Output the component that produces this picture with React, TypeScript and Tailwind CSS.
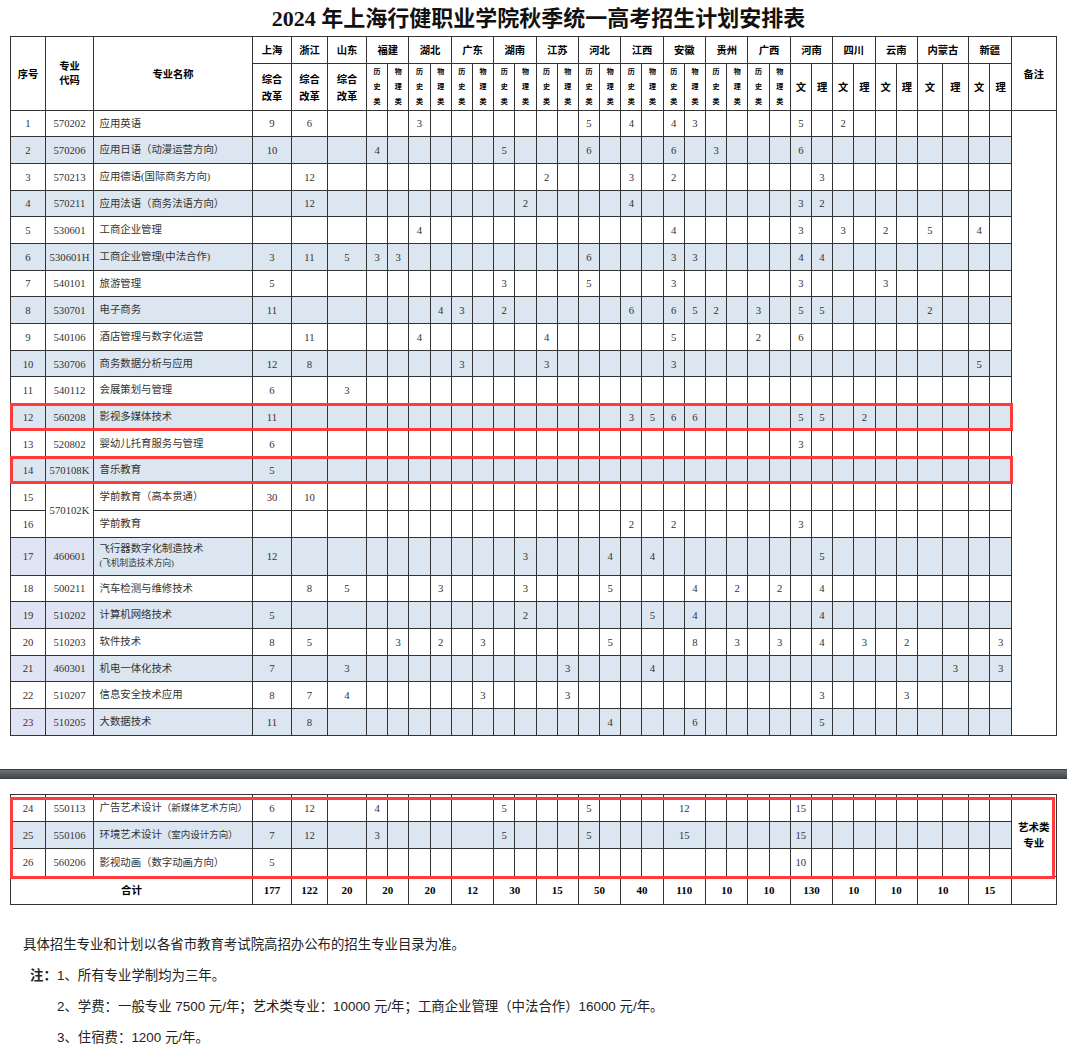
import React from 'react';

type Vals = Record<number, string>;

type Row = {
  no: number;
  code?: string;
  codeSpan?: number;
  name: React.ReactNode;
  vals: Vals;
  shade?: boolean;
  tall?: boolean;
  mark?: boolean;
};

// "0:9 1:6" -> { 0: '9', 1: '6' }
const v = (s: string): Vals => {
  const out: Vals = {};
  s.split(' ')
    .filter(Boolean)
    .forEach((p) => {
      const [k, val] = p.split(':');
      out[Number(k)] = val;
    });
  return out;
};

const COL_W = [
  'w-[35px]',
  'w-[48px]',
  'w-[159px]',
  'w-[39px]',
  'w-[36px]',
  'w-[39px]',
  ...Array(26).fill('w-[21.2px]'),
  'w-[25px]',
  'w-[26px]',
  'w-[21.6px]',
  'w-[21.4px]',
  'w-[44.8px]',
];

const GROUP2 = ['福建', '湖北', '广东', '湖南', '江苏', '河北', '江西', '安徽', '贵州', '广西'];
const GROUP3 = ['河南', '四川', '云南', '内蒙古', '新疆'];

const ROWS: Row[] = [
  { no: 1, code: '570202', name: '应用英语', vals: v('0:9 1:6 5:3 13:5 15:4 17:4 18:3 23:5 25:2') },
  { no: 2, code: '570206', name: '应用日语（动漫运营方向）', vals: v('0:10 3:4 9:5 13:6 17:6 19:3 23:6'), shade: true },
  { no: 3, code: '570213', name: '应用德语(国际商务方向)', vals: v('1:12 11:2 15:3 17:2 24:3') },
  { no: 4, code: '570211', name: '应用法语（商务法语方向）', vals: v('1:12 10:2 15:4 23:3 24:2'), shade: true },
  { no: 5, code: '530601', name: '工商企业管理', vals: v('5:4 17:4 23:3 25:3 27:2 29:5 31:4') },
  { no: 6, code: '530601H', name: '工商企业管理(中法合作)', vals: v('0:3 1:11 2:5 3:3 4:3 13:6 17:3 18:3 23:4 24:4'), shade: true },
  { no: 7, code: '540101', name: '旅游管理', vals: v('0:5 9:3 13:5 17:3 23:3 27:3') },
  { no: 8, code: '530701', name: '电子商务', vals: v('0:11 6:4 7:3 9:2 15:6 17:6 18:5 19:2 21:3 23:5 24:5 29:2'), shade: true },
  { no: 9, code: '540106', name: '酒店管理与数字化运营', vals: v('1:11 5:4 11:4 17:5 21:2 23:6') },
  { no: 10, code: '530706', name: '商务数据分析与应用', vals: v('0:12 1:8 7:3 11:3 17:3 31:5'), shade: true },
  { no: 11, code: '540112', name: '会展策划与管理', vals: v('0:6 2:3') },
  { no: 12, code: '560208', name: '影视多媒体技术', vals: v('0:11 15:3 16:5 17:6 18:6 23:5 24:5 26:2'), shade: true, mark: true },
  { no: 13, code: '520802', name: '婴幼儿托育服务与管理', vals: v('0:6 23:3') },
  { no: 14, code: '570108K', name: '音乐教育', vals: v('0:5'), shade: true, mark: true },
  { no: 15, code: '570102K', codeSpan: 2, name: '学前教育（高本贯通）', vals: v('0:30 1:10') },
  { no: 16, name: '学前教育', vals: v('15:2 17:2 23:3') },
  {
    no: 17,
    code: '460601',
    name: (
      <div className="flex flex-col leading-[15px]">
        <span>飞行器数字化制造技术</span>
        <span className="text-[8.6px]">(飞机制造技术方向)</span>
      </div>
    ),
    vals: v('0:12 10:3 14:4 16:4 24:5'),
    shade: true,
    tall: true,
  },
  { no: 18, code: '500211', name: '汽车检测与维修技术', vals: v('1:8 2:5 6:3 10:3 14:5 18:4 20:2 22:2 24:4') },
  { no: 19, code: '510202', name: '计算机网络技术', vals: v('0:5 10:2 16:5 18:4 24:4'), shade: true },
  { no: 20, code: '510203', name: '软件技术', vals: v('0:8 1:5 4:3 6:2 8:3 14:5 18:8 20:3 22:3 24:4 26:3 28:2 32:3') },
  { no: 21, code: '460301', name: '机电一体化技术', vals: v('0:7 2:3 12:3 16:4 30:3 32:3'), shade: true },
  { no: 22, code: '510207', name: '信息安全技术应用', vals: v('0:8 1:7 2:4 8:3 12:3 24:3 28:3') },
  { no: 23, code: '510205', name: '大数据技术', vals: v('0:11 1:8 14:4 18:6 24:5'), shade: true },
];

const ART_ROWS: Row[] = [
  {
    no: 24,
    code: '550113',
    name: (
      <>
        广告艺术设计<span className="text-[9.5px]">（新媒体艺术方向）</span>
      </>
    ),
    vals: v('0:6 1:12 3:4 9:5 13:5 17:12 23:15'),
    mark: true,
  },
  {
    no: 25,
    code: '550106',
    name: (
      <>
        环境艺术设计<span className="text-[9.5px]">（室内设计方向）</span>
      </>
    ),
    vals: v('0:7 1:12 3:3 9:5 13:5 17:15 23:15'),
    shade: true,
  },
  { no: 26, code: '560206', name: '影视动画（数字动画方向）', vals: v('0:5 23:10') },
];

const TOTALS = ['177', '122', '20', '20', '20', '12', '30', '15', '50', '40', '110', '10', '10', '130', '10', '10', '10', '15'];

const line = 'border border-[#333]';
const th = `${line} p-0 text-center align-middle font-bold text-black [font-family:'Noto_Sans_CJK_SC',sans-serif]`;
const td = `${line} p-0 text-center align-middle text-[10.7px] text-[#333]`;
const nameTd = `${line} p-0 pl-[5.5px] text-left align-middle whitespace-nowrap text-[10.4px] text-[#333]`;

const Cols: React.FC = () => (
  <colgroup>
    {COL_W.map((w, i) => (
      <col key={i} className={w} />
    ))}
  </colgroup>
);

const Header: React.FC = () => (
  <thead>
    <tr className="h-[27px] text-[10.3px]">
      <th rowSpan={2} className={th}>
        序号
      </th>
      <th rowSpan={2} className={`${th} leading-[14px]`}>
        专业
        <br />
        代码
      </th>
      <th rowSpan={2} className={th}>
        专业名称
      </th>
      <th className={th}>上海</th>
      <th className={th}>浙江</th>
      <th className={th}>山东</th>
      {GROUP2.map((p) => (
        <th key={p} colSpan={2} className={th}>
          {p}
        </th>
      ))}
      {GROUP3.map((p) => (
        <th key={p} colSpan={2} className={th}>
          {p}
        </th>
      ))}
      <th rowSpan={2} className={th}>
        备注
      </th>
    </tr>
    <tr className="h-[46.5px]">
      {[0, 1, 2].map((i) => (
        <th key={i} className={`${th} text-[10.3px] leading-[17px]`}>
          综合
          <br />
          改革
        </th>
      ))}
      {GROUP2.map((p) => (
        <React.Fragment key={p}>
          <th className={`${th} text-[7px] leading-[15px]`}>
            历<br />史<br />类
          </th>
          <th className={`${th} text-[7px] leading-[15px]`}>
            物<br />理<br />类
          </th>
        </React.Fragment>
      ))}
      {GROUP3.map((p) => (
        <React.Fragment key={p}>
          <th className={`${th} text-[10.3px]`}>文</th>
          <th className={`${th} text-[10.3px]`}>理</th>
        </React.Fragment>
      ))}
    </tr>
  </thead>
);

const App: React.FC = () => {
  return (
    <div className="min-h-screen w-[1067px] bg-white [font-family:'Liberation_Serif','Noto_Sans_CJK_SC',serif]">
      {/* Title */}
      <div className="flex h-[36px] items-center justify-center pl-[10px] text-[22px] font-bold text-[#111]">
        2024 年上海行健职业学院秋季统一高考招生计划安排表
      </div>

      {/* Main table */}
      <table className="ml-[10px] w-[1046px] table-fixed border-collapse">
        <Cols />
        <Header />
        <tbody>
          {ROWS.map((r, ri) => {
            const lav = r.shade && r.no >= 17;
            return (
              <tr
                key={r.no}
                className={`${r.tall ? 'h-[38px]' : 'h-[26.7px]'} ${r.shade ? 'bg-[#dce6f1]' : 'bg-white'}`}
              >
                <td className={`${td} relative ${lav ? 'bg-[#dfe3f4]' : ''}`}>
                  {r.mark && (
                    <div className="pointer-events-none absolute -top-px -bottom-px -left-px z-10 w-[1003px] border-[3px] border-[#ff3b3b]" />
                  )}
                  {r.no}
                </td>
                {r.code !== undefined && (
                  <td rowSpan={r.codeSpan ?? 1} className={`${td} ${lav ? 'bg-[#dfe3f4]' : ''}`}>
                    {r.code}
                  </td>
                )}
                <td className={nameTd}>{r.name}</td>
                {Array.from({ length: 33 }, (_, i) => (
                  <td key={i} className={td}>
                    {r.vals[i] ?? ''}
                  </td>
                ))}
                {ri === 0 && <td rowSpan={23} className={`${line} bg-white p-0`} />}
              </tr>
            );
          })}
        </tbody>
      </table>

      {/* page break bar */}
      <div className="mt-[33px] h-[10px] w-full border-y border-[#3a3d40] bg-linear-to-b from-[#6e7174] to-[#45484b]" />

      {/* Art majors + totals */}
      <table className="mt-[15px] ml-[10px] w-[1046px] table-fixed border-collapse">
        <Cols />
        <tbody>
          {ART_ROWS.map((r, ri) => {
            const cells: React.ReactNode[] = [];
            for (let i = 0; i < 33; i++) {
              const merged = i === 7 || i === 17;
              cells.push(
                <td key={i} colSpan={merged ? 2 : 1} className={td}>
                  {r.vals[i] ?? ''}
                </td>
              );
              if (merged) i++;
            }
            return (
              <tr key={r.no} className={`h-[27.3px] ${r.shade ? 'bg-[#dce6f1]' : 'bg-white'}`}>
                <td className={`${td} relative`}>
                  {r.mark && (
                    <div className="pointer-events-none absolute top-[2px] -left-px z-10 h-[82px] w-[1045px] border-[3px] border-[#ff3b3b]" />
                  )}
                  {r.no}
                </td>
                <td className={td}>{r.code}</td>
                <td className={nameTd}>{r.name}</td>
                {cells}
                {ri === 0 && (
                  <td
                    rowSpan={3}
                    className={`${line} bg-white p-0 text-center align-middle text-[10.5px] leading-[16px] font-bold text-black [font-family:'Noto_Sans_CJK_SC',sans-serif]`}
                  >
                    艺术类
                    <br />
                    专业
                  </td>
                )}
              </tr>
            );
          })}
          <tr className="h-[28px] bg-white">
            <td
              colSpan={3}
              className={`${line} p-0 text-center align-middle text-[10.5px] font-bold text-black [font-family:'Noto_Sans_CJK_SC',sans-serif]`}
            >
              合计
            </td>
            {TOTALS.map((t, i) => (
              <td
                key={i}
                colSpan={i < 3 ? 1 : 2}
                className={`${line} p-0 text-center align-middle text-[11px] font-bold text-black`}
              >
                {t}
              </td>
            ))}
            <td className={`${line} p-0`} />
          </tr>
        </tbody>
      </table>

      {/* Notes */}
      <div className="mt-[24px] text-[13.4px] leading-[31px] text-[#222] [font-family:'Liberation_Sans','Noto_Sans_CJK_SC',sans-serif]">
        <p className="pl-[23px]">具体招生专业和计划以各省市教育考试院高招办公布的招生专业目录为准。</p>
        <p className="flex pl-[30px]">
          <span className="w-[27px] font-bold">注：</span>
          <span>1、所有专业学制均为三年。</span>
        </p>
        <p className="pl-[57px]">
          2、学费：一般专业 7500 元/年；艺术类专业：10000 元/年；工商企业管理（中法合作）16000 元/年。
        </p>
        <p className="pl-[57px]">3、住宿费：1200 元/年。</p>
      </div>
    </div>
  );
};

export default App;
